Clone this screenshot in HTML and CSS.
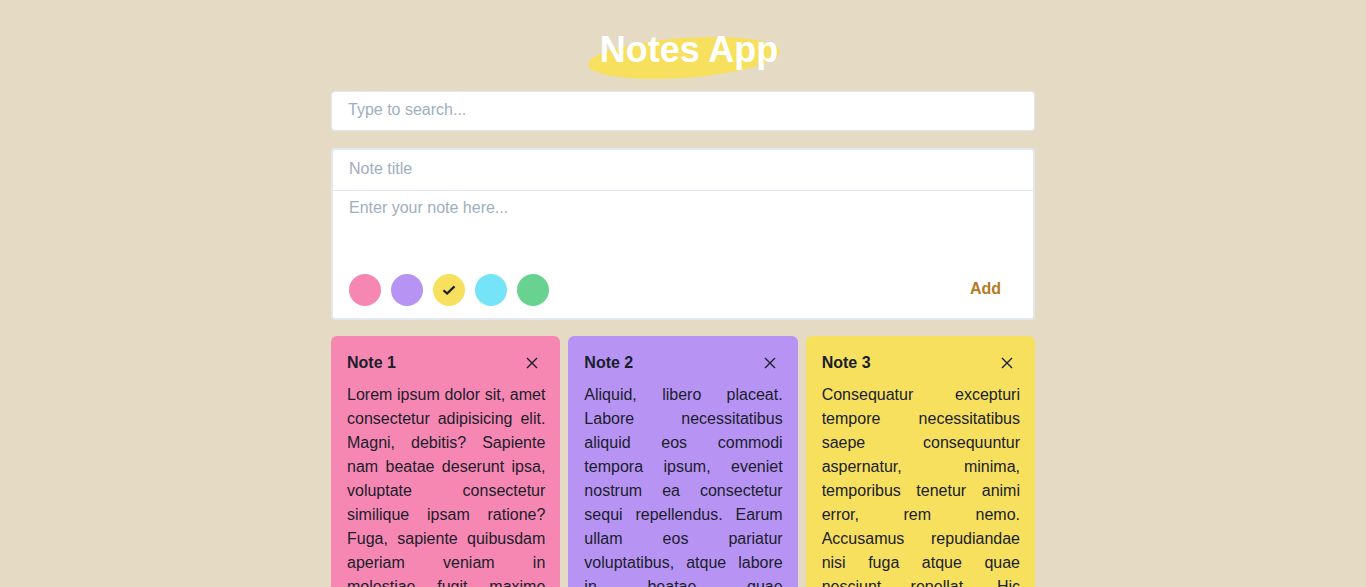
FILE: index.html
```html
<!DOCTYPE html>
<html>
<head>
<meta charset="utf-8">
<link rel="stylesheet" href="styles.css">
</head>
<body>
<div class="app">
  <header class="header">
    <h1 class="title">
      <svg class="blob" width="194" height="46" viewBox="0 0 194 46"><ellipse cx="97" cy="23" rx="96" ry="20" transform="rotate(-4 97 23)" fill="#f6e05e"/></svg>
      <span class="title-text">Notes App</span>
    </h1>
  </header>
  <input class="search" type="text" placeholder="Type to search...">
  <form class="composer">
    <input class="composer-title" type="text" placeholder="Note title">
    <textarea class="composer-body" placeholder="Enter your note here..."></textarea>
    <div class="composer-footer">
      <div class="swatches">
        <span class="swatch pink"></span>
        <span class="swatch purple"></span>
        <span class="swatch yellow"><svg width="16" height="16" viewBox="0 0 16 16"><path d="M2.5 8.2l3.6 3.4 7.4-7.2" fill="none" stroke="#1a202c" stroke-width="2.2"/></svg></span>
        <span class="swatch cyan"></span>
        <span class="swatch green"></span>
      </div>
      <button class="add" type="button">Add</button>
    </div>
  </form>
  <div class="notes">
    <div class="note pink">
      <div class="note-head"><span class="note-title">Note 1</span><svg class="close" width="12" height="12" viewBox="0 0 12 12"><path d="M1 1l10 10M11 1L1 11" stroke="#1a202c" stroke-width="1.4"/></svg></div>
      <p class="note-text">Lorem ipsum dolor sit, amet consectetur adipisicing elit. Magni, debitis? Sapiente nam beatae deserunt ipsa, voluptate consectetur similique ipsam ratione? Fuga, sapiente quibusdam aperiam veniam in molestiae fugit maxime nobis quasi.</p>
    </div>
    <div class="note purple">
      <div class="note-head"><span class="note-title">Note 2</span><svg class="close" width="12" height="12" viewBox="0 0 12 12"><path d="M1 1l10 10M11 1L1 11" stroke="#1a202c" stroke-width="1.4"/></svg></div>
      <p class="note-text">Aliquid, libero placeat. Labore necessitatibus aliquid eos commodi tempora ipsum, eveniet nostrum ea consectetur sequi repellendus. Earum ullam eos pariatur voluptatibus, atque labore in beatae quae exercitationem.</p>
    </div>
    <div class="note yellow">
      <div class="note-head"><span class="note-title">Note 3</span><svg class="close" width="12" height="12" viewBox="0 0 12 12"><path d="M1 1l10 10M11 1L1 11" stroke="#1a202c" stroke-width="1.4"/></svg></div>
      <p class="note-text">Consequatur excepturi tempore necessitatibus saepe consequuntur aspernatur, minima, temporibus tenetur animi error, rem nemo. Accusamus repudiandae nisi fuga atque quae nesciunt repellat. Hic voluptates.</p>
    </div>
  </div>
</div>
</body>
</html>
```
FILE: styles.css
```css
* { box-sizing: border-box; }
html, body { margin: 0; padding: 0; }
body {
  background: #e5dbc4;
  font-family: "Liberation Sans", Arial, sans-serif;
  color: #1a202c;
}
.app {
  width: 704px;
  margin: 0 auto;
  padding-top: 27px;
}
.header {
  display: flex;
  justify-content: center;
  margin-bottom: 18px;
}
.title {
  position: relative;
  margin: 0 0 0 12px;
  font-size: 36px;
  line-height: 46px;
  font-weight: bold;
  color: #fff;
}
.blob {
  position: absolute;
  left: -13px;
  top: 8px;
}
.title-text { position: relative; }
.search {
  display: block;
  width: 100%;
  height: 40px;
  padding: 0 16px 2px 16px;
  border: 1px solid #e2e8f0;
  border-radius: 4px;
  background: #fff;
  font: 16px "Liberation Sans", Arial, sans-serif;
  color: #1a202c;
  outline: none;
}
.search::placeholder, .composer-title::placeholder, .composer-body::placeholder { color: #a0aec0; }
.composer {
  margin-top: 17px;
  display: flex;
  flex-direction: column;
  background: #fff;
  border: 2px solid #e2e8f0;
  border-radius: 4px;
}
.composer-title {
  height: 41px;
  padding: 0 16px 3px 16px;
  border: 0;
  border-bottom: 1px solid #e2e8f0;
  font: 16px "Liberation Sans", Arial, sans-serif;
  outline: none;
  background: transparent;
}
.composer-body {
  height: 83px;
  padding: 5px 16px 8px 16px;
  border: 0;
  resize: none;
  font: 16px/24px "Liberation Sans", Arial, sans-serif;
  outline: none;
}
.composer-footer {
  display: flex;
  justify-content: space-between;
  align-items: center;
  padding: 0 16px 12px 16px;
}
.swatches { display: flex; gap: 10px; }
.swatch {
  width: 32px;
  height: 32px;
  border-radius: 50%;
  display: flex;
  align-items: center;
  justify-content: center;
}
.pink { background: #f687b3; }
.purple { background: #b794f4; }
.yellow { background: #f6e05e; }
.cyan { background: #76e4f7; }
.green { background: #68d391; }
.add {
  border: 0;
  background: transparent;
  font: bold 16px "Liberation Sans", Arial, sans-serif;
  color: #b7791f;
  padding: 0 16px 2px 16px;
  cursor: pointer;
}
.notes {
  margin-top: 16px;
  display: grid;
  grid-template-columns: repeat(3, 1fr);
  gap: 8px;
}
.note {
  border-radius: 6px;
  padding: 17px 15px 16px 16px;
}
.note-head {
  display: flex;
  justify-content: space-between;
  align-items: center;
  height: 20px;
  margin-bottom: 10px;
}
.note-title { font-weight: bold; font-size: 16px; }
.close { margin-right: 7px; }
.note-text {
  margin: 0;
  font-size: 16px;
  line-height: 24px;
  text-align: justify;
  color: #1a202c;
}
```
